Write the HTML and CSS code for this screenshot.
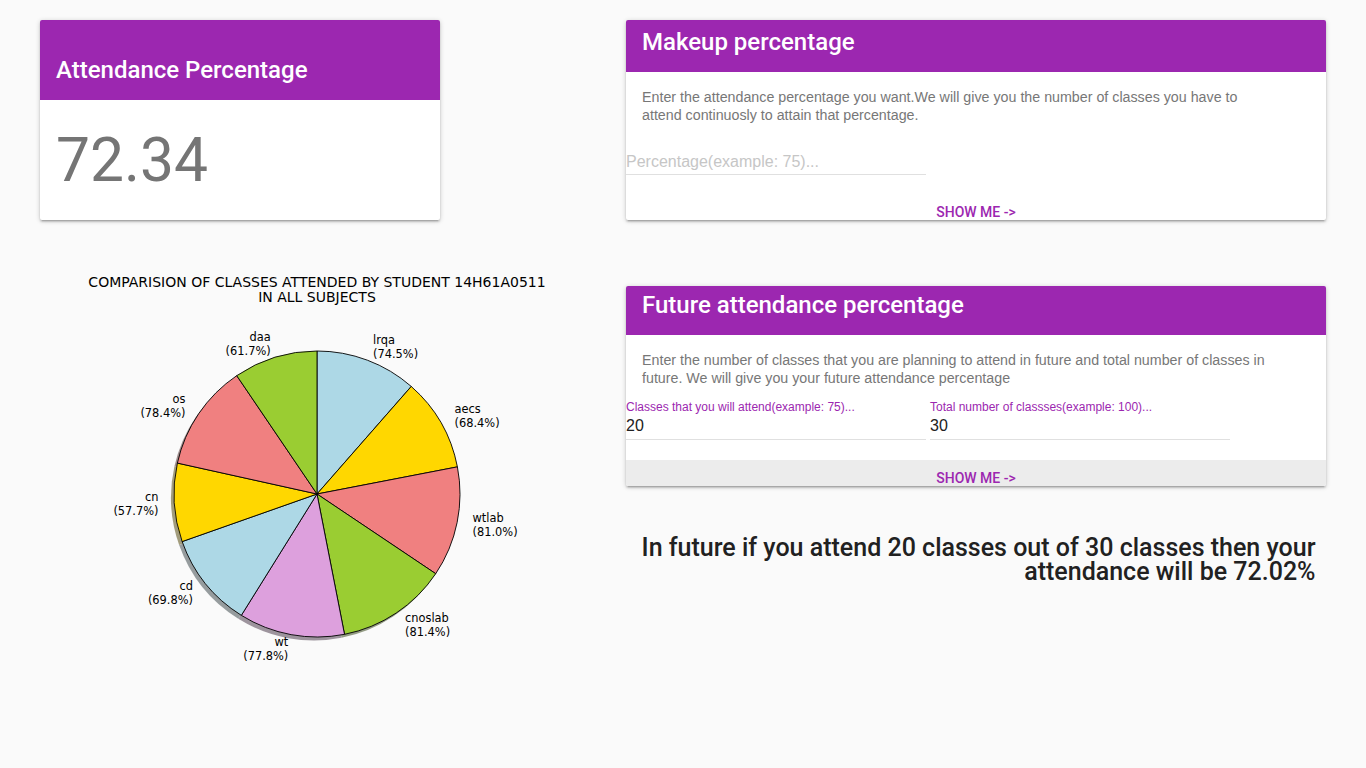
FILE: index.html
```html
<!DOCTYPE html>
<html lang="en">
<head>
<meta charset="utf-8">
<title>Attendance</title>
<link rel="stylesheet" href="styles.css">
</head>
<body>
<div class="page">
  <div class="col-left">
    <div class="card">
      <div class="card-head head-tall"><h2 class="card-title">Attendance Percentage</h2></div>
      <div class="big-value">72.34</div>
    </div>
    <svg class="pie" width="520" height="440" viewBox="60 240 520 440" xmlns="http://www.w3.org/2000/svg">
      <defs>
        <path id="w1" d="M317 494 L317 351 A143 143 0 0 1 411.24 386.45 Z"/>
        <path id="w2" d="M317 494 L411.24 386.45 A143 143 0 0 1 457.40 466.86 Z"/>
        <path id="w3" d="M317 494 L457.40 466.86 A143 143 0 0 1 435.73 573.70 Z"/>
        <path id="w4" d="M317 494 L435.73 573.70 A143 143 0 0 1 344.52 634.33 Z"/>
        <path id="w5" d="M317 494 L344.52 634.33 A143 143 0 0 1 241.33 615.34 Z"/>
        <path id="w6" d="M317 494 L241.33 615.34 A143 143 0 0 1 182.15 541.58 Z"/>
        <path id="w7" d="M317 494 L182.15 541.58 A143 143 0 0 1 177.38 463.08 Z"/>
        <path id="w8" d="M317 494 L177.38 463.08 A143 143 0 0 1 236.74 375.65 Z"/>
        <path id="w9" d="M317 494 L236.74 375.65 A143 143 0 0 1 317 351 Z"/>
      </defs>
      <text class="pie-title" x="317" y="287.3">COMPARISION OF CLASSES ATTENDED BY STUDENT 14H61A0511</text>
      <text class="pie-title" x="317" y="301.7">IN ALL SUBJECTS</text>
      <g class="pie-shadow" transform="translate(-3 3.5)">
        <use href="#w1" fill="#344145"/>
        <use href="#w2" fill="#4d4100"/>
        <use href="#w3" fill="#482626"/>
        <use href="#w4" fill="#2e3e0f"/>
        <use href="#w5" fill="#423042"/>
        <use href="#w6" fill="#344145"/>
        <use href="#w7" fill="#4d4100"/>
        <use href="#w8" fill="#482626"/>
        <use href="#w9" fill="#2e3e0f"/>
      </g>
      <g class="pie-wedges">
        <use href="#w1" fill="#add8e6"/>
        <use href="#w2" fill="#ffd700"/>
        <use href="#w3" fill="#f08080"/>
        <use href="#w4" fill="#9acd32"/>
        <use href="#w5" fill="#dda0dd"/>
        <use href="#w6" fill="#add8e6"/>
        <use href="#w7" fill="#ffd700"/>
        <use href="#w8" fill="#f08080"/>
        <use href="#w9" fill="#9acd32"/>
      </g>
      <g class="pie-labels">
        <text class="lbl-start" x="373"><tspan x="373" y="343.8">lrqa</tspan><tspan x="373" y="357.8">(74.5%)</tspan></text>
        <text class="lbl-start" x="454.5"><tspan x="454.5" y="412.7">aecs</tspan><tspan x="454.5" y="426.7">(68.4%)</tspan></text>
        <text class="lbl-start" x="472.5"><tspan x="472.5" y="522.3">wtlab</tspan><tspan x="472.5" y="536.3">(81.0%)</tspan></text>
        <text class="lbl-start" x="405"><tspan x="405" y="622">cnoslab</tspan><tspan x="405" y="636">(81.4%)</tspan></text>
        <text class="lbl-end" x="288.3"><tspan x="288.3" y="645.7">wt</tspan><tspan x="288.3" y="659.7">(77.8%)</tspan></text>
        <text class="lbl-end" x="193"><tspan x="193" y="589.5">cd</tspan><tspan x="193" y="603.5">(69.8%)</tspan></text>
        <text class="lbl-end" x="158.5"><tspan x="158.5" y="500.5">cn</tspan><tspan x="158.5" y="514.5">(57.7%)</tspan></text>
        <text class="lbl-end" x="185.5"><tspan x="185.5" y="402.6">os</tspan><tspan x="185.5" y="416.6">(78.4%)</tspan></text>
        <text class="lbl-end" x="270.7"><tspan x="270.7" y="340.6">daa</tspan><tspan x="270.7" y="354.6">(61.7%)</tspan></text>
      </g>
    </svg>
  </div>

  <div class="col-right">
    <div class="card card-fixed">
      <div class="card-head head-makeup"><h2 class="card-title">Makeup percentage</h2></div>
      <div class="card-body">
        <p class="desc">Enter the attendance percentage you want.We will give you the number of classes you have to attend continuosly to attain that percentage.</p>
        <input class="field field-gap" type="text" placeholder="Percentage(example: 75)...">
      </div>
      <div class="action">SHOW ME -&gt;</div>
    </div>

    <div class="card card-fixed card-future">
      <div class="card-head head-future"><h2 class="card-title">Future attendance percentage</h2></div>
      <div class="card-body">
        <p class="desc">Enter the number of classes that you are planning to attend in future and total number of classes in future. We will give you your future attendance percentage</p>
        <div class="field-row">
          <label class="field-wrap">
            <span class="field-label">Classes that you will attend(example: 75)...</span>
            <input class="field" type="text" value="20">
          </label>
          <label class="field-wrap">
            <span class="field-label">Total number of classses(example: 100)...</span>
            <input class="field" type="text" value="30">
          </label>
        </div>
      </div>
      <div class="action action-grey">SHOW ME -&gt;</div>
    </div>

    <h5 class="result">In future if you attend 20 classes out of 30 classes then your attendance will be 72.02%</h5>
  </div>
</div>
</body>
</html>
```

FILE: styles.css
```css
* { box-sizing: border-box; }

html, body {
  margin: 0;
  padding: 0;
  background: #fafafa;
}

body {
  font-family: Roboto, "Liberation Sans", Arial, sans-serif;
  color: #212121;
}

.page {
  display: flex;
  justify-content: space-between;
  padding: 20px 40px 0;
}

.col-left {
  width: 400px;
  flex: none;
}

.col-right {
  width: 700px;
  flex: none;
}

.card {
  background: #fff;
  border-radius: 2px;
  overflow: hidden;
  box-shadow: 0 2px 2px 0 rgba(0,0,0,0.14), 0 3px 1px -2px rgba(0,0,0,0.12), 0 1px 5px 0 rgba(0,0,0,0.2);
  height: 200px;
}

.card-fixed {
  display: flex;
  flex-direction: column;
}

.card-future {
  margin-top: 66px;
}

.card-head {
  background: #9c27b0;
  padding: 0 16px 14px;
}

.head-tall { padding-top: 33.5px; padding-bottom: 14.5px; }
.head-makeup { padding-top: 5.5px; padding-bottom: 14.5px; }
.head-future { padding-top: 2.5px; padding-bottom: 14.5px; }

.card-title {
  margin: 0;
  font-family: Roboto, sans-serif;
  font-weight: 500;
  font-size: 24px;
  line-height: 32px;
  color: #fff;
}

.big-value {
  font-family: Roboto, sans-serif;
  font-weight: 400;
  font-size: 60.5px;
  line-height: 60px;
  color: #757575;
  padding: 31px 16px 0;
}

.card-body {
  padding: 16px 0 0;
}

.desc {
  margin: 0 0 0 16px;
  width: 632px;
  font-family: "Liberation Sans", Arial, sans-serif;
  font-size: 14.25px;
  line-height: 18px;
  color: #777;
}

.field {
  display: block;
  width: 300px;
  height: 26px;
  margin: 0;
  padding: 0;
  border: none;
  border-bottom: 1px solid #e0e0e0;
  background: transparent;
  outline: none;
  font-family: "Liberation Sans", Arial, sans-serif;
  font-size: 16px;
  color: #212121;
}

.field::placeholder {
  color: #c6c6c6;
  opacity: 1;
}

.field-gap {
  margin-top: 25px;
}

.field-row {
  display: flex;
  gap: 4px;
  margin-top: 12.5px;
}

.field-wrap {
  display: block;
  width: 300px;
}

.field-label {
  display: block;
  font-family: "Liberation Sans", Arial, sans-serif;
  font-size: 12px;
  line-height: 14px;
  color: #9c27b0;
}

.action {
  margin-top: auto;
  height: 26px;
  flex: none;
  padding-top: 7.5px;
  text-align: center;
  font-family: Roboto, sans-serif;
  font-weight: 500;
  font-size: 14px;
  line-height: 20px;
  color: #9c27b0;
  white-space: nowrap;
}

.action-grey {
  background: #ececec;
}

.result {
  margin: 50px 0 0;
  padding: 0 10.5px;
  text-align: right;
  font-family: Roboto, sans-serif;
  font-weight: 500;
  font-size: 25px;
  line-height: 23.5px;
  color: #212121;
}

.pie {
  display: block;
  margin: 20px 0 0 20px;
  overflow: visible;
}

.pie-title {
  font-family: "DejaVu Sans", sans-serif;
  font-size: 14px;
  fill: #000;
  text-anchor: middle;
}

.pie-shadow {
  opacity: 0.5;
}

.pie-wedges use {
  stroke: #000;
  stroke-width: 0.9;
  stroke-linejoin: round;
}

.pie-labels text {
  font-family: "DejaVu Sans", sans-serif;
  font-size: 11.4px;
  fill: #000;
}

.lbl-start { text-anchor: start; }
.lbl-end { text-anchor: end; }
```
